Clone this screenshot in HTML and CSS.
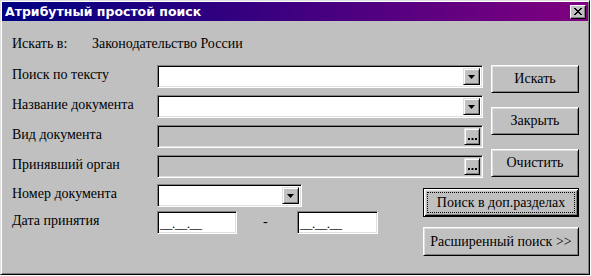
FILE: index.html
```html
<!DOCTYPE html>
<html lang="ru">
  <head>
    <meta charset="UTF-8" />
    <title>Атрибутный простой поиск</title>
    <link rel="stylesheet" href="styles.css">
  </head>
  <body>
    <div class="window">
      <div class="titlebar">
        <span class="title">Атрибутный простой поиск</span>
        <button class="close" type="button" aria-label="Закрыть">
          <svg width="8" height="7" viewBox="0 0 8 7">
            <path d="M0 0h2v1h1v1h2V1h1V0h2v1H7v1H6v1H5v1h1v1h1v1h1v1H6V6H5V5H3v1H2v1H0V6h1V5h1V4h1V3H2V2H1V1H0z" fill="#000"/>
          </svg>
        </button>
      </div>

      <div class="content">
        <div class="where">
          <span class="where-label">Искать в:</span>
          <span>Законодательство России</span>
        </div>

        <div class="section top">
          <div class="fields">
            <label>Поиск по тексту</label>
            <div class="field">
              <span class="value"></span>
              <span class="drop"><svg width="7" height="4" viewBox="0 0 7 4"><path d="M0 0h7L3.5 4z" fill="#000"/></svg></span>
            </div>

            <label>Название документа</label>
            <div class="field">
              <span class="value"></span>
              <span class="drop"><svg width="7" height="4" viewBox="0 0 7 4"><path d="M0 0h7L3.5 4z" fill="#000"/></svg></span>
            </div>

            <label>Вид документа</label>
            <div class="field gray">
              <span class="value"></span>
              <span class="more"><svg width="9" height="2" viewBox="0 0 9 2"><path d="M0 0h2v2H0zM3.5 0h2v2h-2zM7 0h2v2H7z" fill="#000"/></svg></span>
            </div>

            <label>Принявший орган</label>
            <div class="field gray">
              <span class="value"></span>
              <span class="more"><svg width="9" height="2" viewBox="0 0 9 2"><path d="M0 0h2v2H0zM3.5 0h2v2h-2zM7 0h2v2H7z" fill="#000"/></svg></span>
            </div>
          </div>

          <div class="buttons">
            <button type="button" class="btn">Искать</button>
            <button type="button" class="btn">Закрыть</button>
            <button type="button" class="btn">Очистить</button>
          </div>
        </div>

        <div class="section bottom">
          <div class="fields small">
            <label>Номер документа</label>
            <div class="field number">
              <span class="value"></span>
              <span class="drop"><svg width="7" height="4" viewBox="0 0 7 4"><path d="M0 0h7L3.5 4z" fill="#000"/></svg></span>
            </div>

            <label>Дата принятия</label>
            <div class="dates">
              <div class="field date"><span class="mask">__.__.__</span></div>
              <span class="dash">-</span>
              <div class="field date"><span class="mask">__.__.__</span></div>
            </div>
          </div>

          <div class="buttons wide">
            <button type="button" class="btn default">Поиск в доп.разделах</button>
            <button type="button" class="btn">Расширенный поиск &gt;&gt;</button>
          </div>
        </div>
      </div>
    </div>
  </body>
</html>
```

FILE: styles.css
```css
body {
  margin: 0;
  background-color: #fff;
  font-family: "Liberation Serif", "Times New Roman", serif;
  font-size: 14px;
  color: #000;
}

.window {
  box-sizing: border-box;
  width: 590px;
  height: 275px;
  background-color: #c0c0c0;
  border: 1px solid;
  border-color: #dfdfdf #000 #000 #dfdfdf;
  box-shadow: inset 1px 1px #fff, inset -1px -1px #808080;
  padding: 1px;
}

.titlebar {
  height: 19px;
  display: flex;
  align-items: center;
  padding: 0 2px 0 3px;
  background: linear-gradient(to right, #000080, #800080);
}

.title {
  flex: 1;
  color: #fff;
  font-family: "DejaVu Sans", Verdana, sans-serif;
  font-weight: bold;
  font-size: 12.5px;
}

.close {
  box-sizing: border-box;
  width: 16px;
  height: 14px;
  padding: 0;
  display: flex;
  align-items: center;
  justify-content: center;
  background-color: #c0c0c0;
  border: 1px solid;
  border-color: #fff #000 #000 #fff;
  box-shadow: inset -1px -1px #808080;
}

.content {
  padding: 15px 9px 0 10px;
}

.where {
  display: flex;
  line-height: 15px;
}

.where-label {
  width: 80px;
}

.section {
  display: flex;
  justify-content: space-between;
}

.top {
  margin-top: 14px;
}

.bottom {
  margin-top: 6px;
}

.fields {
  display: grid;
  grid-template-columns: 145px 326px;
  grid-auto-rows: 23px;
  row-gap: 7px;
  align-items: center;
}

.fields.small {
  grid-template-columns: 145px 221px;
  row-gap: 4px;
}

.fields label {
  line-height: 15px;
  margin-top: -4px;
}

.field {
  box-sizing: border-box;
  height: 23px;
  display: flex;
  background-color: #fff;
  border: 1px solid;
  border-color: #808080 #fff #fff #808080;
  box-shadow: inset 1px 1px #000, inset -1px -1px #dfdfdf;
  padding: 2px;
}

.field.gray {
  background-color: #c0c0c0;
}

.field.number {
  width: 145px;
}

.value {
  flex: 1;
}

.drop,
.more {
  box-sizing: border-box;
  width: 17px;
  display: flex;
  align-items: center;
  justify-content: center;
  background-color: #c0c0c0;
  border: 1px solid;
  border-color: #dfdfdf #000 #000 #dfdfdf;
  box-shadow: inset 1px 1px #fff, inset -1px -1px #808080;
}

.more {
  width: 16px;
  align-items: flex-end;
  padding-bottom: 4px;
}

.dates {
  display: flex;
  align-items: center;
}

.field.date {
  width: 80px;
  height: 23px;
  align-items: flex-end;
}

.field.date + .dash + .field.date {
  width: 81px;
}

.mask {
  font-size: 13px;
  line-height: 14px;
  letter-spacing: -0.5px;
}

.dash {
  width: 60px;
  box-sizing: border-box;
  padding-left: 26px;
  margin-top: -2px;
}

.buttons {
  display: flex;
  flex-direction: column;
  gap: 14px;
}

.buttons.wide {
  margin-top: 4px;
  gap: 10px;
}

.btn {
  box-sizing: border-box;
  width: 88px;
  height: 28px;
  padding: 0;
  font-family: "Liberation Serif", "Times New Roman", serif;
  font-size: 14px;
  color: #000;
  background-color: #c0c0c0;
  border: 1px solid;
  border-color: #fff #000 #000 #fff;
  box-shadow: inset 1px 1px #dfdfdf, inset -1px -1px #808080;
}

.wide .btn {
  width: 156px;
  height: 29px;
}

.btn.default {
  border: 1px solid #000;
  box-shadow: inset 1px 1px #fff, inset -1px -1px #000, inset 2px 2px #dfdfdf, inset -2px -2px #808080;
  outline: 1px dotted #000;
  outline-offset: -5px;
}
```
